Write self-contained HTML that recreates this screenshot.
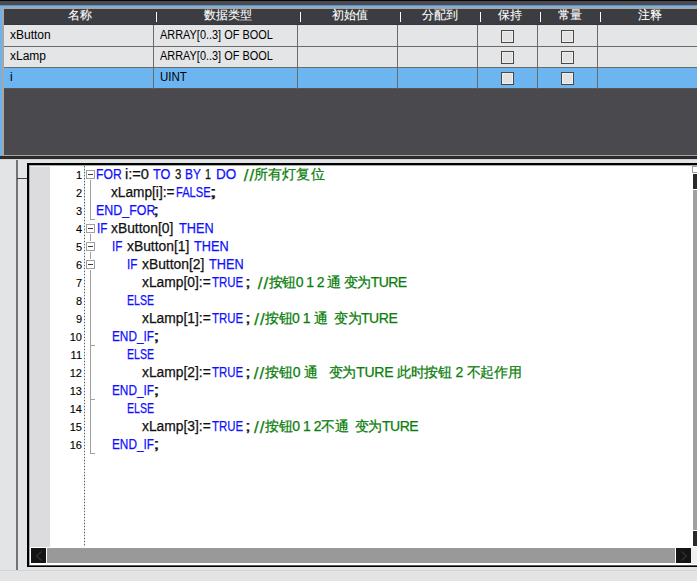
<!DOCTYPE html>
<html><head><meta charset="utf-8">
<style>
*{margin:0;padding:0;box-sizing:border-box}
html,body{width:697px;height:581px;overflow:hidden;background:#e3e4e6;font-family:"Liberation Sans",sans-serif}
.a{position:absolute}
.hd{position:absolute;top:7px;height:16px;color:#fff;font-size:12px;line-height:16px;text-align:center;-webkit-text-stroke:0.1px #fff}
.bar{position:absolute;top:12px;width:1px;height:10px;background:#fff}
.vs{position:absolute;top:25px;width:1px;height:64px;background:#6a6a6a}
.cell{position:absolute;font-size:12px;line-height:20px;color:#000;white-space:pre}
.cb{position:absolute;width:13px;height:13px;border:1px solid #4a4744;background:#e2e2e3;box-shadow:inset 0 0 0 1px #eeeeef}
.ln{position:absolute;left:50px;margin-top:1px;width:32px;text-align:right;font-size:11px;line-height:18px;color:#000;-webkit-text-stroke:0.12px #000}
.t{position:absolute;font-size:14px;line-height:18px;white-space:pre;transform-origin:0 0;-webkit-text-stroke:0.25px currentColor}
.n{color:#111}
.k{color:#1010ff}
.c{color:#0a7d0a;letter-spacing:0}
i{display:inline-block;font-style:normal;letter-spacing:0}
.fb{position:absolute;left:86px;width:9px;height:9px;border:1px solid #a0a0a0;background:#fff}
.fb:after{content:"";position:absolute;left:1px;top:3px;width:5px;height:1px;background:#3a3a3a}
.fl{position:absolute;left:90px;width:1px;background:#a0a0a0}
.ft{position:absolute;left:90px;width:5px;height:1px;background:#a0a0a0}
</style></head><body>
<!-- top panel -->
<div class="a" style="left:0;top:0;width:697px;height:1px;background:#0a0a0a"></div>
<div class="a" style="left:0;top:1px;width:697px;height:4px;background:#4b4a50"></div>
<div class="a" style="left:0;top:5px;width:697px;height:151px;background:#6ab3ef"></div>
<div class="a" style="left:0;top:5px;width:697px;height:1px;background:#5e92c4"></div>
<div class="a" style="left:2px;top:7px;width:695px;height:149px;background:#a8a6a4"></div>
<div class="a" style="left:4px;top:9px;width:693px;height:146px;background:#4a494e"></div>
<div class="a" style="left:4px;top:9px;width:693px;height:16px;background:#3c3d42"></div>
<div class="a" style="left:4px;top:24px;width:693px;height:1px;background:#36373b"></div>
<!-- header texts -->
<div class="hd" style="left:4px;width:152px"><i style="width:12px">名</i><i style="width:12px">称</i></div>
<div class="hd" style="left:156px;width:144px"><i style="width:12px">数</i><i style="width:12px">据</i><i style="width:12px">类</i><i style="width:12px">型</i></div>
<div class="hd" style="left:300px;width:100px"><i style="width:12px">初</i><i style="width:12px">始</i><i style="width:12px">值</i></div>
<div class="hd" style="left:400px;width:80px"><i style="width:12px">分</i><i style="width:12px">配</i><i style="width:12px">到</i></div>
<div class="hd" style="left:480px;width:60px"><i style="width:12px">保</i><i style="width:12px">持</i></div>
<div class="hd" style="left:540px;width:60px"><i style="width:12px">常</i><i style="width:12px">量</i></div>
<div class="hd" style="left:600px;width:100px"><i style="width:12px">注</i><i style="width:12px">释</i></div>
<div class="bar" style="left:156px"></div>
<div class="bar" style="left:300px"></div>
<div class="bar" style="left:400px"></div>
<div class="bar" style="left:480px"></div>
<div class="bar" style="left:540px"></div>
<div class="bar" style="left:600px"></div>
<!-- rows -->
<div class="a" style="left:4px;top:25px;width:693px;height:21px;background:#e4e5e7"></div>
<div class="a" style="left:4px;top:46px;width:693px;height:1px;background:#6a6a6a"></div>
<div class="a" style="left:4px;top:47px;width:693px;height:20px;background:#e4e5e7"></div>
<div class="a" style="left:4px;top:67px;width:693px;height:1px;background:#6a6a6a"></div>
<div class="a" style="left:4px;top:68px;width:693px;height:20px;background:#6cb5f1"></div>
<div class="a" style="left:4px;top:88px;width:693px;height:1px;background:#5a5450"></div>
<div class="vs" style="left:153px"></div>
<div class="vs" style="left:297px"></div>
<div class="vs" style="left:397px"></div>
<div class="vs" style="left:477px"></div>
<div class="vs" style="left:537px"></div>
<div class="vs" style="left:597px"></div>
<div class="cell" style="left:10px;top:25px">xButton</div>
<div class="cell" style="left:10px;top:46px">xLamp</div>
<div class="cell" style="left:10px;top:67px">i</div>
<div class="cell" style="left:160px;top:25px;transform:scaleX(0.911);transform-origin:0 0">ARRAY[0..3] OF BOOL</div>
<div class="cell" style="left:160px;top:46px;transform:scaleX(0.911);transform-origin:0 0">ARRAY[0..3] OF BOOL</div>
<div class="cell" style="left:160px;top:67px;transform:scaleX(0.96);transform-origin:0 0">UINT</div>
<div class="cb" style="left:501px;top:30px"></div>
<div class="cb" style="left:561px;top:30px"></div>
<div class="cb" style="left:501px;top:51px"></div>
<div class="cb" style="left:561px;top:51px"></div>
<div class="cb" style="left:501px;top:72px"></div>
<div class="cb" style="left:561px;top:72px"></div>
<!-- splitter -->
<div class="a" style="left:0;top:156px;width:697px;height:3px;background:#262626"></div>
<div class="a" style="left:0;top:157px;width:697px;height:1px;background:#313131"></div>
<div class="a" style="left:0;top:159px;width:697px;height:1px;background:#d6d6d6"></div>
<!-- lower panel -->
<div class="a" style="left:16px;top:160px;width:2px;height:410px;background:#737373"></div>
<div class="a" style="left:17px;top:178px;width:10px;height:1px;background:#404040"></div>
<div class="a" style="left:0;top:570px;width:697px;height:1px;background:#d4d4d2"></div>
<div class="a" style="left:27px;top:163px;width:680px;height:404px;background:#000"></div>
<div class="a" style="left:29px;top:165px;width:680px;height:400px;background:#a8a8a8"></div>
<div class="a" style="left:30px;top:166px;width:680px;height:399px;background:#fff"></div>
<div class="a" style="left:29px;top:565px;width:680px;height:1px;background:#5a5a5a"></div>
<div class="a" style="left:30px;top:166px;width:20px;height:381px;background:#f0f0f2"></div>
<div class="a" style="left:30px;top:167px;width:20px;height:380px;background:#dcdcde"></div>
<div class="a" style="left:84px;top:166px;width:1px;height:381px;background:repeating-linear-gradient(#5e5e5e 0 1px,#b4b4b4 1px 1.5px,#dcdcdc 1.5px 3px)"></div>
<!-- line numbers -->
<div class="ln" style="top:165px">1</div>
<div class="ln" style="top:183px">2</div>
<div class="ln" style="top:201px">3</div>
<div class="ln" style="top:219px">4</div>
<div class="ln" style="top:237px">5</div>
<div class="ln" style="top:255px">6</div>
<div class="ln" style="top:273px">7</div>
<div class="ln" style="top:291px">8</div>
<div class="ln" style="top:309px">9</div>
<div class="ln" style="top:327px">10</div>
<div class="ln" style="top:345px">11</div>
<div class="ln" style="top:363px">12</div>
<div class="ln" style="top:381px">13</div>
<div class="ln" style="top:399px">14</div>
<div class="ln" style="top:417px">15</div>
<div class="ln" style="top:435px">16</div>
<!-- fold -->
<div class="fl" style="top:180px;height:39px"></div>
<div class="ft" style="top:219px"></div>
<div class="fl" style="top:234px;height:7px"></div>
<div class="fl" style="top:252px;height:7px"></div>
<div class="fl" style="top:270px;height:183px"></div>
<div class="ft" style="top:345px"></div>
<div class="ft" style="top:399px"></div>
<div class="ft" style="top:453px"></div>
<div class="fb" style="top:170px"></div>
<div class="fb" style="top:224px"></div>
<div class="fb" style="top:242px"></div>
<div class="fb" style="top:260px"></div>
<!-- code -->
<div class="t k" style="left:95.73px;top:165px;transform:scaleX(0.868)">FOR</div>
<div class="t n" style="left:124.95px;top:165px;transform:scaleX(1.045)">i:=0</div>
<div class="t k" style="left:153.20px;top:165px;transform:scaleX(0.905)">TO</div>
<div class="t n" style="left:174.70px;top:165px;transform:scaleX(0.812)">3</div>
<div class="t k" style="left:185.25px;top:165px;transform:scaleX(0.847)">BY</div>
<div class="t n" style="left:205.13px;top:165px;transform:scaleX(0.771)">1</div>
<div class="t k" style="left:215.73px;top:165px;transform:scaleX(0.965)">DO</div>
<div class="t c" style="left:243.8px;top:167px;font-size:17px;letter-spacing:1px">//</div>
<div class="t c" style="left:254.0px;top:165px;letter-spacing:0.17px"><i style="width:14.17px">所</i><i style="width:14.17px">有</i><i style="width:14.17px">灯</i><i style="width:14.17px">复</i><i style="width:14.17px">位</i></div>
<div class="t n" style="left:111.20px;top:183px;transform:scaleX(0.977)">xLamp[i]:=</div>
<div class="t k" style="left:176.00px;top:183px;transform:scaleX(0.795)">FALSE</div>
<div class="t n" style="left:209.15px;top:183px;transform:scaleX(2.150)">;</div>
<div class="t k" style="left:95.71px;top:201px;transform:scaleX(0.888)">END_FOR</div>
<div class="t n" style="left:153.30px;top:201px;transform:scaleX(1.600)">;</div>
<div class="t k" style="left:96.56px;top:219px;transform:scaleX(0.836)">IF</div>
<div class="t n" style="left:111.20px;top:219px;transform:scaleX(0.989)">xButton[0]</div>
<div class="t k" style="left:178.60px;top:219px;transform:scaleX(0.908)">THEN</div>
<div class="t k" style="left:111.86px;top:237px;transform:scaleX(0.836)">IF</div>
<div class="t n" style="left:126.50px;top:237px;transform:scaleX(0.989)">xButton[1]</div>
<div class="t k" style="left:193.90px;top:237px;transform:scaleX(0.908)">THEN</div>
<div class="t k" style="left:127.16px;top:255px;transform:scaleX(0.836)">IF</div>
<div class="t n" style="left:141.80px;top:255px;transform:scaleX(0.989)">xButton[2]</div>
<div class="t k" style="left:209.20px;top:255px;transform:scaleX(0.908)">THEN</div>
<div class="t n" style="left:141.90px;top:273px;transform:scaleX(0.987)">xLamp[0]:=</div>
<div class="t k" style="left:211.90px;top:273px;transform:scaleX(0.816)">TRUE</div>
<div class="t n" style="left:245.30px;top:273px;transform:scaleX(1.500)">;</div>
<div class="t c" style="left:257.7px;top:275px;font-size:17px;letter-spacing:1px">//</div>
<div class="t c" style="left:268.9px;top:273px;letter-spacing:-0.59px"><i style="width:13.41px">按</i><i style="width:13.41px">钮</i>0 1 2 <i style="width:13.41px">通</i> <i style="width:13.41px">变</i><i style="width:13.41px">为</i>TURE</div>
<div class="t k" style="left:126.85px;top:291px;transform:scaleX(0.754)">ELSE</div>
<div class="t n" style="left:141.90px;top:309px;transform:scaleX(0.987)">xLamp[1]:=</div>
<div class="t k" style="left:211.90px;top:309px;transform:scaleX(0.816)">TRUE</div>
<div class="t n" style="left:245.30px;top:309px;transform:scaleX(1.500)">;</div>
<div class="t c" style="left:254.2px;top:311px;font-size:17px;letter-spacing:1px">//</div>
<div class="t c" style="left:265.0px;top:309px;letter-spacing:-0.46px"><i style="width:13.54px">按</i><i style="width:13.54px">钮</i>0 1 <i style="width:13.54px">通</i>  <i style="width:13.54px">变</i><i style="width:13.54px">为</i>TURE</div>
<div class="t k" style="left:111.86px;top:327px;transform:scaleX(0.843)">END_IF</div>
<div class="t n" style="left:152.75px;top:327px;transform:scaleX(1.750)">;</div>
<div class="t k" style="left:126.85px;top:345px;transform:scaleX(0.754)">ELSE</div>
<div class="t n" style="left:141.90px;top:363px;transform:scaleX(0.987)">xLamp[2]:=</div>
<div class="t k" style="left:211.90px;top:363px;transform:scaleX(0.816)">TRUE</div>
<div class="t n" style="left:245.30px;top:363px;transform:scaleX(1.500)">;</div>
<div class="t c" style="left:253.8px;top:365px;font-size:17px;letter-spacing:1px">//</div>
<div class="t c" style="left:265.3px;top:363px;letter-spacing:-0.25px"><i style="width:13.75px">按</i><i style="width:13.75px">钮</i>0 <i style="width:13.75px">通</i>   <i style="width:13.75px">变</i><i style="width:13.75px">为</i>TURE <i style="width:13.75px">此</i><i style="width:13.75px">时</i><i style="width:13.75px">按</i><i style="width:13.75px">钮</i> 2 <i style="width:13.75px">不</i><i style="width:13.75px">起</i><i style="width:13.75px">作</i><i style="width:13.75px">用</i></div>
<div class="t k" style="left:111.86px;top:381px;transform:scaleX(0.843)">END_IF</div>
<div class="t n" style="left:152.75px;top:381px;transform:scaleX(1.750)">;</div>
<div class="t k" style="left:126.85px;top:399px;transform:scaleX(0.754)">ELSE</div>
<div class="t n" style="left:141.90px;top:417px;transform:scaleX(0.987)">xLamp[3]:=</div>
<div class="t k" style="left:211.90px;top:417px;transform:scaleX(0.816)">TRUE</div>
<div class="t n" style="left:245.30px;top:417px;transform:scaleX(1.500)">;</div>
<div class="t c" style="left:254.0px;top:419px;font-size:17px;letter-spacing:1px">//</div>
<div class="t c" style="left:265.2px;top:417px;letter-spacing:-0.47px"><i style="width:13.53px">按</i><i style="width:13.53px">钮</i>0 1 2<i style="width:13.53px">不</i><i style="width:13.53px">通</i>  <i style="width:13.53px">变</i><i style="width:13.53px">为</i>TURE</div>
<div class="t k" style="left:111.86px;top:435px;transform:scaleX(0.843)">END_IF</div>
<div class="t n" style="left:152.75px;top:435px;transform:scaleX(1.750)">;</div>
<!-- /code -->
<!-- h scrollbar -->
<div class="a" style="left:31px;top:548px;width:15px;height:15px;background:#141414"></div>
<div class="a" style="left:47px;top:548px;width:628px;height:15px;background:#999"></div>
<div class="a" style="left:676px;top:548px;width:15px;height:15px;background:#141414"></div>
<div class="a" style="left:691px;top:547px;width:6px;height:17px;background:#f0f0f0"></div>
<svg class="a" style="left:0;top:0" width="697" height="581"><path d="M41.5 551.5L36.5 556L41.5 560.5M681.5 551.5L686.5 556L681.5 560.5" stroke="#333" stroke-width="1.1" fill="none"/></svg>
<!-- v scrollbar -->
<div class="a" style="left:692px;top:166px;width:8px;height:7px;border:1px solid #a0a0a0;background:#fff"></div>
<div class="a" style="left:693px;top:174px;width:6px;height:15px;background:#2a2a2e"></div>
<div class="a" style="left:693px;top:190px;width:6px;height:340px;background:#a0a0a0"></div>
<div class="a" style="left:693px;top:531px;width:6px;height:15px;background:#2a2a2e"></div>
</body></html>
